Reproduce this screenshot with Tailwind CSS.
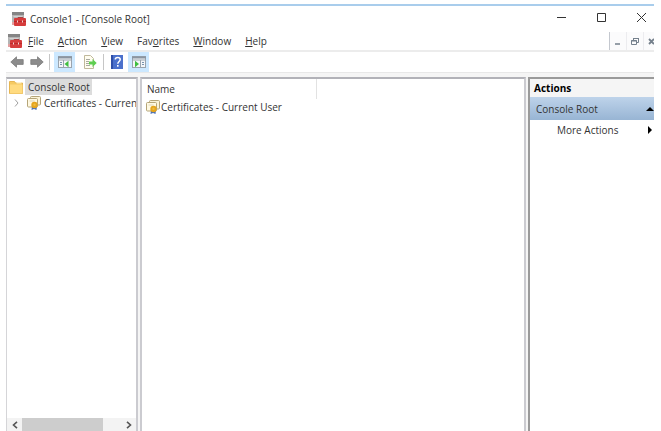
<!DOCTYPE html>
<html lang="en">
<head>
  <meta charset="UTF-8" />
  <meta name="viewport" content="width=device-width, initial-scale=1.0" />
  <title>Console1 - [Console Root]</title>
  <script src="https://cdn.jsdelivr.net/npm/@tailwindcss/browser@4"></script>
</head>
<body class="bg-white font-['Open_Sans','Noto_Sans',sans-serif] text-[10px] leading-4 text-[#333]">
  <!-- shared icons -->
  <svg class="hidden">
    <symbol id="toolbox" viewBox="0 0 14 14">
      <rect x="0" y="0" width="12" height="11" fill="#b4b4b4" />
      <rect x="0" y="0" width="12" height="3" fill="#858585" />
      <path d="M1.500 4.500h9" stroke="#d2d2d2" />
      <path d="M0 10h3v3h-3z" fill="#e3a0a0" />
      <path d="M6 6.500V5.500h5v1" fill="none" stroke="#a34444" />
      <rect x="2" y="6" width="12" height="8" rx="1" fill="#d63c3c" />
      <path d="M2 9.500h12" stroke="#bb2a2a" />
      <path d="M5.500 8.500v2M10.500 8.500v2" stroke="#f3d0d0" />
    </symbol>
    <symbol id="certs" viewBox="0 0 14 14">
      <rect x="3.500" y="0.500" width="10" height="8.500" rx="1" fill="#fbf3d8" stroke="#b5a578" />
      <rect x="0.500" y="2.500" width="10" height="8.500" rx="1" fill="#fff9e2" stroke="#b5a578" />
      <path d="M2.500 5h5" stroke="#ddd6bb" />
      <path d="M5 10l-0.500 4 2.500-1 2.500 1 0.500-4z" fill="#4a72b8" />
      <circle cx="7.500" cy="9" r="3.200" fill="#e5a51c" />
      <circle cx="7.500" cy="8.700" r="1.200" fill="#f0bc40" />
    </symbol>
    <symbol id="arrow" viewBox="0 0 14 12">
      <path d="M0.800 6L6.500 0.800V3.600H13.200V8.400H6.500V11.200z" fill="#8c8c8c" stroke="#7c7c7c" stroke-width="0.8" />
    </symbol>
  </svg>

  <div class="flex h-screen flex-col pt-1 pr-[7px] pl-1.5">
    <!-- title bar -->
    <header class="flex h-7 shrink-0 items-center border-t-2 border-[#a9cdec] pl-1.5">
      <svg class="mr-1 h-3.5 w-3.5"><use href="#toolbox" /></svg>
      <h1>Console1 - [Console Root]</h1>
      <div class="mr-1 ml-auto flex items-center gap-6">
        <button aria-label="Minimize" class="h-4 w-4"><svg class="h-4 w-4" viewBox="0 0 16 16"><path d="M3 6.500h9" stroke="#333" /></svg></button>
        <button aria-label="Maximize" class="h-4 w-4"><svg class="h-4 w-4" viewBox="0 0 16 16"><path d="M3.500 2.500h8v8h-8z" fill="none" stroke="#333" /></svg></button>
        <button aria-label="Close" class="h-4 w-4"><svg class="h-4 w-4" viewBox="0 0 16 16"><path d="M3 2l9 9M12 2l-9 9" stroke="#333" /></svg></button>
      </div>
    </header>

    <!-- menu bar -->
    <nav class="flex h-[18px] shrink-0 items-center overflow-hidden pl-0.5">
      <svg class="mr-1.5 h-3.5 w-3.5"><use href="#toolbox" /></svg>
      <div class="flex gap-3.5">
        <button><u>F</u>ile</button>
        <button><u>A</u>ction</button>
        <button><u>V</u>iew</button>
        <button>Fav<u>o</u>rites</button>
        <button><u>W</u>indow</button>
        <button><u>H</u>elp</button>
      </div>
      <div class="ml-auto flex h-full w-[45px] gap-px overflow-hidden border-l border-[#c4c8cf] bg-[#ececef]">
        <button aria-label="Minimize child window" class="w-4 shrink-0 bg-[#fbfbfc]"><svg class="h-[18px] w-4" viewBox="0 0 16 18"><path d="M5 12h5" stroke="#75808c" stroke-width="1.5" /></svg></button>
        <button aria-label="Restore child window" class="w-4 shrink-0 bg-[#fbfbfc]"><svg class="h-[18px] w-4" viewBox="0 0 16 18"><path d="M6.500 8.500V6.500h5v4h-2M4.500 8.500h5v4h-5z" fill="none" stroke="#75808c" /><path d="M6 6.500h6M4 9h6" stroke="#75808c" /></svg></button>
        <button aria-label="Close child window" class="w-4 shrink-0 bg-[#fbfbfc]"><svg class="h-[18px] w-4" viewBox="0 0 16 18"><path d="M5 7l5 5M10 7l-5 5" stroke="#75808c" stroke-width="1.8" /></svg></button>
      </div>
    </nav>

    <!-- toolbar -->
    <div class="flex h-[22px] shrink-0 items-center border-t-2 border-[#ececec] pl-1">
      <button aria-label="Back"><svg class="h-3 w-3.5"><use href="#arrow" /></svg></button>
      <button aria-label="Forward" class="ml-1.5"><svg class="h-3 w-3.5 -scale-x-100"><use href="#arrow" /></svg></button>
      <span class="mr-1 ml-[5px] h-4 w-px bg-[#c6c6c6]"></span>
      <button aria-label="Show/Hide Console Tree" class="flex h-5 w-[21px] items-center justify-center bg-[#cce8ff]">
        <svg class="h-3.5 w-3.5" viewBox="0 0 14 14">
          <rect x="0.5" y="1.500" width="13" height="11" fill="#f4f6f8" stroke="#9aa4ae" />
          <path d="M0 2.500h14" stroke="#8a95a1" stroke-width="2" />
          <path d="M1 5h12M5.500 5v8" stroke="#9ba5af" />
          <path d="M2 7.500h2M2 9.500h2" stroke="#7893ae" />
          <path d="M6.500 9l4-3.200v6.400z" fill="#3fbe3f" />
        </svg>
      </button>
      <button aria-label="Export List" class="ml-2">
        <svg class="h-3.5 w-3.5" viewBox="0 0 14 14">
          <path d="M1.500 0.500h6l3 3v10h-9z" fill="#fffdf0" stroke="#c0b99c" />
          <path d="M3 4.500h4M3 6.500h3M3 8.500h3M3 10.500h4" stroke="#a9a9a0" />
          <path d="M6 6.500h3.500V4l4.200 4-4.200 4V9.500H6z" fill="#5fce50" />
        </svg>
      </button>
      <span class="mx-1.5 h-4 w-px bg-[#c6c6c6]"></span>
      <button aria-label="Help">
        <svg class="h-3.5 w-3.5" viewBox="0 0 14 14">
          <rect x="1" y="0" width="12" height="14" fill="#4a70cc" />
          <path d="M2 0v14" stroke="#2f4fa8" stroke-width="2" />
          <path d="M5.300 4.500C5.300 1.800 10.200 1.800 10.200 4.500 10.200 6.500 7.800 6.500 7.800 8.800" fill="none" stroke="#fff" stroke-width="1.500" />
          <rect x="7" y="10" width="1.600" height="1.700" fill="#fff" />
        </svg>
      </button>
      <button aria-label="Show/Hide Action Pane" class="ml-1 flex h-5 w-[21px] items-center justify-center bg-[#cce8ff]">
        <svg class="h-3.5 w-3.5" viewBox="0 0 14 14">
          <rect x="0.5" y="1.500" width="13" height="11" fill="#f4f6f8" stroke="#9aa4ae" />
          <path d="M0 2.500h14" stroke="#8a95a1" stroke-width="2" />
          <path d="M1 5h12M8.500 5v8" stroke="#9ba5af" />
          <path d="M10 7.500h2M10 9.500h2" stroke="#7893ae" />
          <path d="M7 9L3 5.800v6.400z" fill="#3fbe3f" />
        </svg>
      </button>
    </div>

    <main class="flex min-h-0 flex-1 border-t border-[#e8e8e8] bg-[#f5f5f5] pt-1">
      <!-- console tree -->
      <section class="flex w-[132px] shrink-0 flex-col overflow-hidden border-t-2 border-r-2 border-l border-t-[#b2b2b8] border-r-[#cbcbd0] border-l-[#d5d5d8] bg-white">
        <div class="flex items-center pl-0.5">
          <svg class="h-3.5 w-3.5" viewBox="0 0 14 14">
            <path d="M0.500 1.500h5l1 1.500h7v10.500h-13z" fill="#f6ca62" stroke="#e6b653" />
            <path d="M1 4.500h12.500v9H1z" fill="#ffdb80" />
            <path d="M7.500 2h5v1.500h-5z" fill="#fff3cd" />
          </svg>
          <span class="ml-0.5 bg-[#dcdcdc] pr-0.5 pl-[3px] whitespace-nowrap">Console Root</span>
        </div>
        <div class="flex items-center pl-1.5">
          <button aria-label="Expand Certificates" class="mr-1.5"><svg class="h-2 w-2" viewBox="0 0 8 8"><path d="M2 0.500l3 3.500-3 3.500" fill="none" stroke="#a0a0a0" /></svg></button>
          <svg class="mr-[3px] h-3.5 w-3.5 shrink-0"><use href="#certs" /></svg>
          <span class="whitespace-nowrap">Certificates - Curren</span>
        </div>
        <div class="mt-auto flex h-[13px] items-center bg-[#f3f3f3]">
          <button aria-label="Scroll left" class="flex w-[15px] justify-center"><svg class="h-2 w-2" viewBox="0 0 8 8"><path d="M6 0.800L2.500 4 6 7.200" fill="none" stroke="#555" stroke-width="1.600" /></svg></button>
          <div class="h-full w-[81px] bg-[#cdcdcd]"></div>
          <button aria-label="Scroll right" class="ml-auto flex w-[15px] justify-center"><svg class="h-2 w-2" viewBox="0 0 8 8"><path d="M2 0.800L5.500 4 2 7.200" fill="none" stroke="#555" stroke-width="1.600" /></svg></button>
        </div>
      </section>

      <!-- result list -->
      <section class="ml-0.5 min-w-0 flex-1 border-x-2 border-t-2 border-x-[#cbcbd0] border-t-[#b2b2b8] bg-white">
        <table class="w-full table-fixed text-left">
          <thead>
            <tr>
              <th class="h-5 w-[174px] border-r border-[#e2e2e2] pl-[5px] font-normal">Name</th>
              <th></th>
            </tr>
          </thead>
          <tbody>
            <tr>
              <td class="pl-1"><div class="flex items-center gap-px whitespace-nowrap"><svg class="h-3.5 w-3.5 shrink-0"><use href="#certs" /></svg>Certificates - Current User</div></td>
              <td></td>
            </tr>
          </tbody>
        </table>
      </section>

      <!-- actions pane -->
      <aside class="ml-0.5 w-[126px] shrink-0 border-t-2 border-l-2 border-[#9a9a9a] bg-white">
        <h2 class="h-[18px] bg-[#f5f5f5] pl-1 leading-[18px] font-bold text-black">Actions</h2>
        <button class="flex h-[23px] w-full items-center justify-between bg-linear-to-b from-[#bed3ea] to-[#98b5d4] pl-1.5">
          Console Root
          <svg class="h-2 w-2" viewBox="0 0 8 8"><path d="M0 6l4-4 4 4z" fill="#000" /></svg>
        </button>
        <button class="flex h-5 w-full items-center justify-between pl-[27px]">
          More Actions
          <svg class="h-2 w-2" viewBox="0 0 8 8"><path d="M2 0l4 4-4 4z" fill="#000" /></svg>
        </button>
      </aside>
    </main>
  </div>
</body>
</html>
